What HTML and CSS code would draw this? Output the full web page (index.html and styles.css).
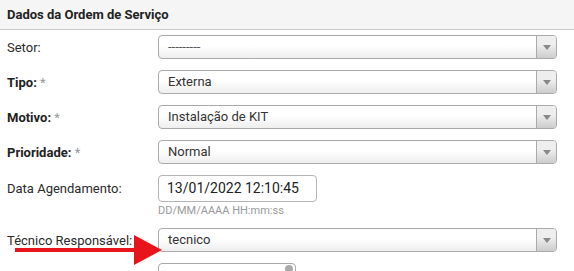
FILE: index.html
```html
<!DOCTYPE html>
<html lang="pt-BR">
<head>
<meta charset="utf-8">
<link rel="stylesheet" href="styles.css">
</head>
<body>
<div class="panel">
  <div class="panel-head">Dados da Ordem de Serviço</div>
  <div class="form">
    <div class="row">
      <label class="lbl">Setor:</label>
      <div class="select"><span class="val dashes">---------</span><span class="arrow"><i></i></span></div>
    </div>
    <div class="row">
      <label class="lbl req">Tipo: <span class="ast">*</span></label>
      <div class="select"><span class="val">Externa</span><span class="arrow"><i></i></span></div>
    </div>
    <div class="row">
      <label class="lbl req">Motivo: <span class="ast">*</span></label>
      <div class="select"><span class="val">Instalação de KIT</span><span class="arrow"><i></i></span></div>
    </div>
    <div class="row">
      <label class="lbl req">Prioridade: <span class="ast">*</span></label>
      <div class="select"><span class="val">Normal</span><span class="arrow"><i></i></span></div>
    </div>
    <div class="row row-date">
      <label class="lbl lbl-date">Data Agendamento:</label>
      <div class="date-wrap">
        <div class="date-input">13/01/2022 12:10:45</div>
        <div class="hint">DD/MM/AAAA HH:mm:ss</div>
      </div>
    </div>
    <div class="row">
      <label class="lbl">Técnico Responsável:</label>
      <div class="select"><span class="val">tecnico</span><span class="arrow"><i></i></span></div>
    </div>
    <div class="row">
      <label class="lbl"></label>
      <div class="small-box"><span class="knob"></span></div>
    </div>
  </div>
</div>
<svg class="pointer" width="574" height="271" viewBox="0 0 574 271">
  <rect x="15" y="248" width="122" height="4" fill="#e8141c"/>
  <polygon points="134,235 162,250 134,265" fill="#e8141c"/>
</svg>
</body>
</html>
```

FILE: styles.css
```css
html, body {
  margin: 0;
  padding: 0;
  background: #fff;
}
body {
  font-family: Roboto, "Noto Sans", sans-serif;
  color: #333;
  width: 574px;
  height: 271px;
  overflow: hidden;
  position: relative;
}
.panel {
  height: 271px;
  overflow: hidden;
}
.panel-head {
  height: 29px;
  line-height: 29px;
  background: #f5f5f5;
  border-bottom: 1px solid #c8c8c8;
  padding-left: 7px;
  font-size: 13px;
  font-weight: 700;
  color: #222;
}
.form {
  display: flex;
  flex-direction: column;
  gap: 11px;
  padding-top: 5px;
}
.row {
  display: flex;
  align-items: center;
}
.row-date {
  align-items: flex-start;
}
.lbl {
  width: 151px;
  padding-left: 7px;
  font-size: 13px;
  color: #2a2a2a;
  flex: none;
}
.lbl-date {
  line-height: 27px;
}
.req {
  font-weight: 700;
  color: #222;
}
.ast {
  color: #999;
  font-weight: 400;
}
.select {
  box-sizing: border-box;
  width: 399px;
  height: 24px;
  border: 1px solid #aaa;
  border-radius: 4px;
  background: linear-gradient(to top, #eee 0%, #fff 55%);
  display: flex;
  align-items: stretch;
  overflow: hidden;
}
.val {
  flex: 1;
  padding-left: 9px;
  font-size: 13px;
  line-height: 22px;
  color: #333;
}
.dashes {
  font-size: 13px;
  color: #555;
}
.arrow {
  width: 19px;
  border-left: 1px solid #aaa;
  background: linear-gradient(to top, #ccc 0%, #eee 60%);
  display: flex;
  align-items: center;
  justify-content: center;
}
.arrow i {
  width: 0;
  height: 0;
  border-left: 4px solid transparent;
  border-right: 4px solid transparent;
  border-top: 5px solid #888;
  margin-top: 1px;
}
.date-wrap {
  display: flex;
  flex-direction: column;
  gap: 2px;
}
.date-input {
  box-sizing: border-box;
  width: 159px;
  height: 27px;
  border: 1px solid #b5b5b5;
  border-radius: 4px;
  padding-left: 8px;
  font-size: 14px;
  line-height: 25px;
  color: #222;
}
.hint {
  font-size: 11px;
  line-height: 13px;
  color: #999;
}
.small-box {
  box-sizing: border-box;
  width: 138px;
  height: 24px;
  border: 1px solid #aaa;
  border-radius: 4px;
  display: flex;
  justify-content: flex-end;
  padding: 1px 2px;
}
.knob {
  width: 8px;
  height: 8px;
  border-radius: 50%;
  background: #aaa;
}
.pointer {
  position: absolute;
  left: 0;
  top: 0;
  pointer-events: none;
}
```
